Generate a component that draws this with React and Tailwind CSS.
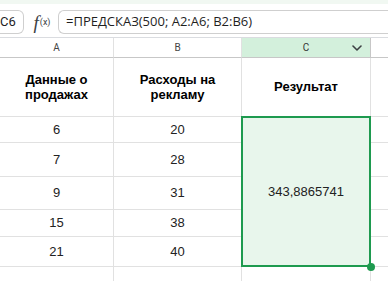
import React from "react";

const rows = [
  { a: "6", b: "20", h: "h-[26px]" },
  { a: "7", b: "28", h: "h-[34px]" },
  { a: "9", b: "31", h: "h-[33px]" },
  { a: "15", b: "38", h: "h-[27px]" },
  { a: "21", b: "40", h: "h-[30px]" },
];

const cell = "border-r border-b border-[#e1e1e1] flex items-center justify-center";

export default function App() {
  return (
    <div className="w-[388px] h-[281px] overflow-hidden bg-white font-['Liberation_Sans',Arial,sans-serif] text-[#1f1f1f]">
      {/* top strip */}
      <div className="h-[4px] bg-[#f1f8f2]" />

      {/* formula bar */}
      <div className="h-[34px] flex items-start pt-[6px] border-b border-[#dadce0]">
        <div className="w-[24px] h-[24px] border border-l-0 border-[#cfcfcf] rounded-r-[6px] flex items-center text-[13px] font-['Roboto',sans-serif] text-[#1f1f1f]">
          C6
        </div>
        <div className="w-[34px] h-[24px] flex items-center justify-center text-[#3c4043] pl-[2px]">
          <span className="font-['Liberation_Serif',serif] italic text-[19px] leading-none">f</span>
          <span className="text-[9px] leading-none font-['Roboto',sans-serif] ml-[1px]">(x)</span>
        </div>
        <div className="flex-1 h-[24px] border border-r-0 border-[#cfcfcf] rounded-l-[6px] flex items-center pl-[7px] text-[13px] font-['Open_Sans',sans-serif] text-[#1f1f1f] whitespace-nowrap">
          =ПРЕДСКАЗ(500; A2:A6; B2:B6)
        </div>
      </div>

      {/* grid */}
      <div className="grid grid-cols-[114px_128px_129px_17px] text-[13px]">
        {/* column letters */}
        <div className={`${cell} h-[20px] border-b-[#c7c7c7] text-[10px] text-[#444] font-['Roboto',sans-serif]`}>A</div>
        <div className={`${cell} h-[20px] border-b-[#c7c7c7] text-[10px] text-[#444] font-['Roboto',sans-serif]`}>B</div>
        <div className={`${cell} h-[20px] border-b-[#c7c7c7] border-r-[#c7c7c7] bg-[#d3f0dc] text-[10px] text-[#333] font-['Roboto',sans-serif] relative`}>
          C
          <svg className="absolute right-[8px] top-[7px]" width="10" height="6" viewBox="0 0 10 6">
            <path d="M1 1l4 4 4-4" fill="none" stroke="#3c4043" strokeWidth="1.6" strokeLinecap="round" strokeLinejoin="round" />
          </svg>
        </div>
        <div className={`${cell} h-[20px] border-b-[#c7c7c7] border-r-0`} />

        {/* header row */}
        <div className={`${cell} h-[59px] font-bold text-center leading-[15px] text-black`}>
          Данные о<br />продажах
        </div>
        <div className={`${cell} h-[59px] font-bold text-center leading-[15px] text-black`}>
          Расходы на<br />рекламу
        </div>
        <div className={`${cell} h-[59px] font-bold text-black`}>Результат</div>
        <div className={`${cell} h-[59px] border-r-0`} />

        {/* data rows; column C is a single merged cell */}
        {rows.map((r, i) => (
          <React.Fragment key={i}>
            <div className={`${cell} ${r.h} col-start-1 text-[#222]`}>{r.a}</div>
            <div className={`${cell} ${r.h} col-start-2 text-[#222]`}>{r.b}</div>
            {i === 0 && (
              <div className="row-span-5 col-start-3 relative border-r border-b border-[#e1e1e1] bg-[#e8f6ec] flex items-center justify-center text-[#222]">
                <div className="absolute -left-px -top-px right-[-1px] bottom-[-1px] border-2 border-[#1e9a4f]" />
                <div className="absolute right-[-5px] bottom-[-5px] w-[8px] h-[8px] rounded-full bg-[#1e9a4f]" />
                343,8865741
              </div>
            )}
            <div className={`${cell} ${r.h} col-start-4 border-r-0`} />
          </React.Fragment>
        ))}

        {/* trailing row */}
        <div className={`${cell} h-[20px]`} />
        <div className={`${cell} h-[20px]`} />
        <div className={`${cell} h-[20px]`} />
        <div className={`${cell} h-[20px] border-r-0`} />
      </div>
    </div>
  );
}
